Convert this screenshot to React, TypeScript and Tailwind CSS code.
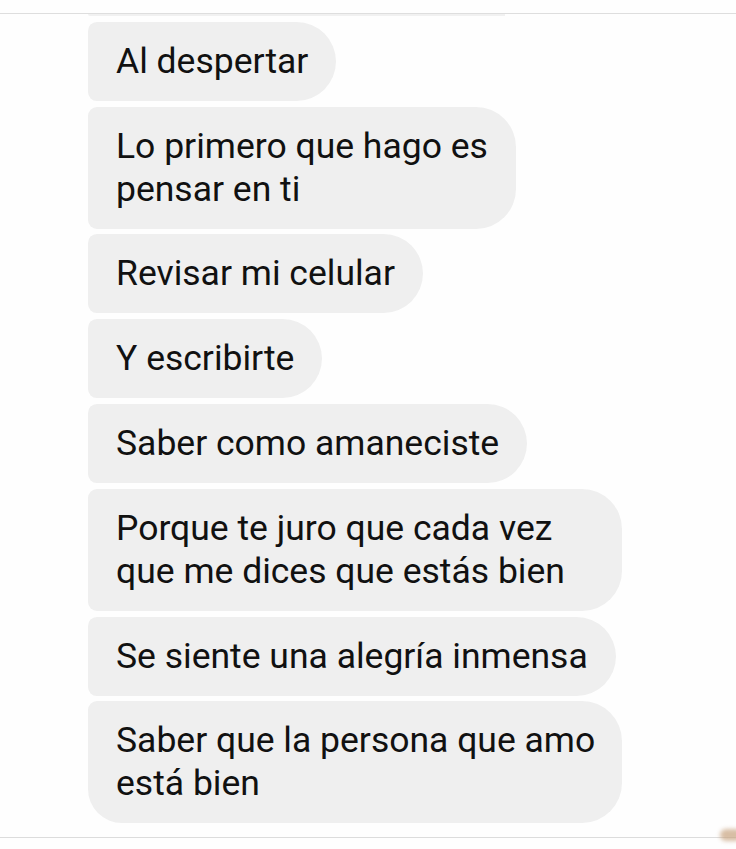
const messages: { lines: string[]; wide?: boolean; last?: boolean }[] = [
  { lines: ["Al despertar"] },
  { lines: ["Lo primero que hago es", "pensar en ti"] },
  { lines: ["Revisar mi celular"] },
  { lines: ["Y escribirte"] },
  { lines: ["Saber como amaneciste"] },
  { lines: ["Porque te juro que cada vez", "que me dices que estás bien"], wide: true },
  { lines: ["Se siente una alegría inmensa"] },
  { lines: ["Saber que la persona que amo", "está bien"], wide: true, last: true },
];

function Bubble({ lines, wide, last }: { lines: string[]; wide?: boolean; last?: boolean }) {
  return (
    <div
      className={
        "bg-[#efefef] px-[28px] py-[18px] text-[35.5px] leading-[43px] text-[#111] whitespace-nowrap rounded-tl-[9px] rounded-tr-[40px] rounded-br-[40px] " +
        (last ? "rounded-bl-[34px] " : "rounded-bl-[9px] ") +
        (wide ? "w-[534px]" : "w-fit")
      }
    >
      {lines.map((l, i) => (
        <div key={i}>{l}</div>
      ))}
    </div>
  );
}

export default function App() {
  return (
    <div
      className="relative h-[849px] w-full overflow-hidden bg-[#fefefe]"
      style={{ fontFamily: "Roboto, 'Noto Sans', sans-serif" }}
    >
      <div className="h-[14px] border-b border-[#dedede]" />
      <div className="flex flex-col gap-[5.8px] pl-[88px]">
        {/* cola del mensaje anterior, cortado arriba */}
        <div className="h-[2px] w-[417px] rounded-bl-[9px] bg-[#f1f1f1]" />
        {messages.map((m, i) => (
          <Bubble key={i} lines={m.lines} wide={m.wide} last={m.last} />
        ))}
      </div>
      <div className="mt-[14px] border-t border-[#dcdcdc]" />
      <div className="absolute right-[-6px] top-[829px] h-[12px] w-[22px] rounded-full bg-[#c8a37f] opacity-70 blur-[2px]" />
    </div>
  );
}
